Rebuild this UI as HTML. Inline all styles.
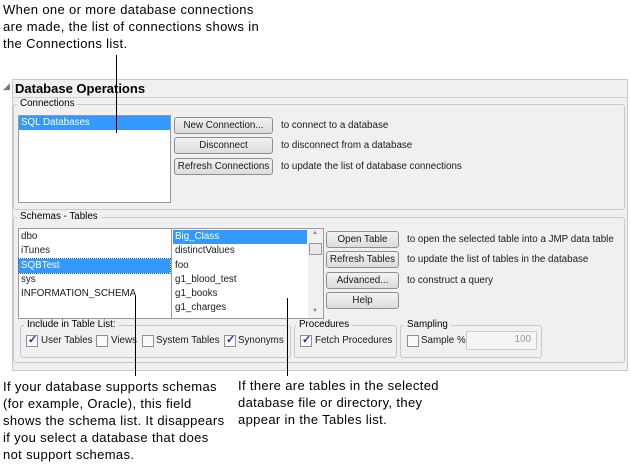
<!DOCTYPE html>
<html><head><style>
*{margin:0;padding:0;box-sizing:border-box}
body{width:631px;height:469px;background:#fff;position:relative;overflow:hidden;font-family:"Liberation Sans",sans-serif;color:#000}
.a{position:absolute}
.note{position:absolute;font-size:13px;letter-spacing:0.35px;line-height:17px;white-space:nowrap}
.grp{position:absolute;border:1px solid #c9c9c9;border-radius:3px}
.lbl{position:absolute;background:#f0f0f0;padding:0 3px;font-size:9.8px;top:-7px;left:3px;line-height:12px;white-space:nowrap}
.list{position:absolute;background:#fff;border:1px solid #9a9a9a}
.sel{position:absolute;background:#3399ff;color:#fff}
.btn{position:absolute;border:1px solid #8e8f8f;border-radius:3px;background:linear-gradient(#f2f2f2,#dcdcdc);font-size:9.8px;text-align:center;line-height:15px;white-space:nowrap;color:#1a1a1a}
.t{position:absolute;font-size:9.8px;line-height:14px;white-space:nowrap;color:#1a1a1a}
.cb{position:absolute;width:12px;height:12px;border:1px solid #8f8f8f;background:#fafafa}
.cb.c::after{content:"✓";position:absolute;left:1px;top:-3px;font-size:11px;color:#2a2aa0;font-weight:bold}
.vl{position:absolute;width:1px;background:#000}
</style></head><body>
<div class="note" style="left:3px;top:1px">When one or more database connections<br>are made, the list of connections shows in<br>the Connections list.</div>

<div class="a" style="left:12px;top:79px;width:616px;height:292px;background:#f0f0f0;border:1px solid #c8c8c8"></div>
<div class="a" style="left:3px;top:81px;font-size:9px;color:#777">&#9698;</div>
<div class="a" style="left:15px;top:81px;font-size:13px;font-weight:bold;line-height:15px">Database Operations</div>
<div class="a" style="left:13px;top:97px;width:614px;height:1px;background:#d0d0d0"></div>

<div class="grp" style="left:13px;top:104px;width:612px;height:106px"><div class="lbl">Connections</div></div>
<div class="list" style="left:18px;top:115px;width:153px;height:88px"></div>
<div class="sel" style="left:19px;top:116px;width:151px;height:14px"></div>
<div class="t" style="left:21px;top:116px;color:#fff">SQL Databases</div>
<div class="btn" style="left:174px;top:117px;width:99px;height:17px">New Connection...</div>
<div class="btn" style="left:174px;top:137px;width:99px;height:17px">Disconnect</div>
<div class="btn" style="left:174px;top:158px;width:99px;height:17px">Refresh Connections</div>
<div class="t" style="left:281px;top:119px">to connect to a database</div>
<div class="t" style="left:281px;top:139px">to disconnect from a database</div>
<div class="t" style="left:281px;top:160px">to update the list of database connections</div>

<div class="grp" style="left:13px;top:217px;width:612px;height:146px"><div class="lbl">Schemas - Tables</div></div>
<div class="list" style="left:18px;top:228px;width:154px;height:91px"></div>
<div class="sel" style="left:19px;top:259px;width:151px;height:14px;outline:1px dotted #1a5fb0"></div>
<div class="t" style="left:21px;top:230px">dbo</div>
<div class="t" style="left:21px;top:244px">iTunes</div>
<div class="t" style="left:21px;top:259px;color:#fff">SQBTest</div>
<div class="t" style="left:21px;top:273px">sys</div>
<div class="t" style="left:21px;top:287px">INFORMATION_SCHEMA</div>
<div class="list" style="left:171px;top:228px;width:153px;height:91px"></div>
<div class="a" style="left:308px;top:229px;width:15px;height:89px;background:#f0f0f0"></div>
<div class="a" style="left:309px;top:243px;width:13px;height:12px;border:1px solid #999;background:#e8e8e8"></div>
<div class="a" style="left:312px;top:230px;font-size:6px;color:#888">▲</div>
<div class="a" style="left:312px;top:308px;font-size:6px;color:#888">▼</div>
<div class="sel" style="left:173px;top:230px;width:134px;height:14px"></div>
<div class="t" style="left:175px;top:230px;color:#fff">Big_Class</div>
<div class="t" style="left:175px;top:244px">distinctValues</div>
<div class="t" style="left:175px;top:259px">foo</div>
<div class="t" style="left:175px;top:273px">g1_blood_test</div>
<div class="t" style="left:175px;top:287px">g1_books</div>
<div class="t" style="left:175px;top:301px">g1_charges</div>
<div class="btn" style="left:326px;top:231px;width:73px;height:17px">Open Table</div>
<div class="btn" style="left:326px;top:251px;width:73px;height:17px">Refresh Tables</div>
<div class="btn" style="left:326px;top:272px;width:73px;height:17px">Advanced...</div>
<div class="btn" style="left:326px;top:292px;width:73px;height:17px">Help</div>
<div class="t" style="left:407px;top:233px">to open the selected table into a JMP data table</div>
<div class="t" style="left:407px;top:253px">to update the list of tables in the database</div>
<div class="t" style="left:407px;top:274px">to construct a query</div>

<div class="grp" style="left:20px;top:325px;width:271px;height:33px"><div class="lbl">Include in Table List:</div></div>
<div class="cb c" style="left:26px;top:335px"></div><div class="t" style="left:41px;top:334px">User Tables</div>
<div class="cb" style="left:96px;top:335px"></div><div class="t" style="left:111px;top:334px">Views</div>
<div class="cb" style="left:142px;top:335px"></div><div class="t" style="left:156px;top:334px">System Tables</div>
<div class="cb c" style="left:224px;top:335px"></div><div class="t" style="left:238px;top:334px">Synonyms</div>
<div class="grp" style="left:294px;top:325px;width:103px;height:33px"><div class="lbl" style="left:1px">Procedures</div></div>
<div class="cb c" style="left:300px;top:335px"></div><div class="t" style="left:315px;top:334px">Fetch Procedures</div>
<div class="grp" style="left:400px;top:325px;width:142px;height:33px"><div class="lbl">Sampling</div></div>
<div class="cb" style="left:407px;top:335px"></div><div class="t" style="left:421px;top:334px">Sample %</div>
<div class="a" style="left:466px;top:331px;width:71px;height:19px;border:1px solid #ccc;background:#f4f4f4;font-size:9.8px;color:#999;text-align:right;padding:2px 5px">100</div>

<div class="vl" style="left:116px;top:55px;height:78px"></div>
<div class="vl" style="left:135px;top:296px;height:80px"></div>
<div class="vl" style="left:287px;top:298px;height:78px"></div>

<div class="note" style="left:3px;top:378px">If your database supports schemas<br>(for example, Oracle), this field<br>shows the schema list. It disappears<br>if you select a database that does<br>not support schemas.</div>
<div class="note" style="left:238px;top:377px">If there are tables in the selected<br>database file or directory, they<br>appear in the Tables list.</div>
</body></html>
